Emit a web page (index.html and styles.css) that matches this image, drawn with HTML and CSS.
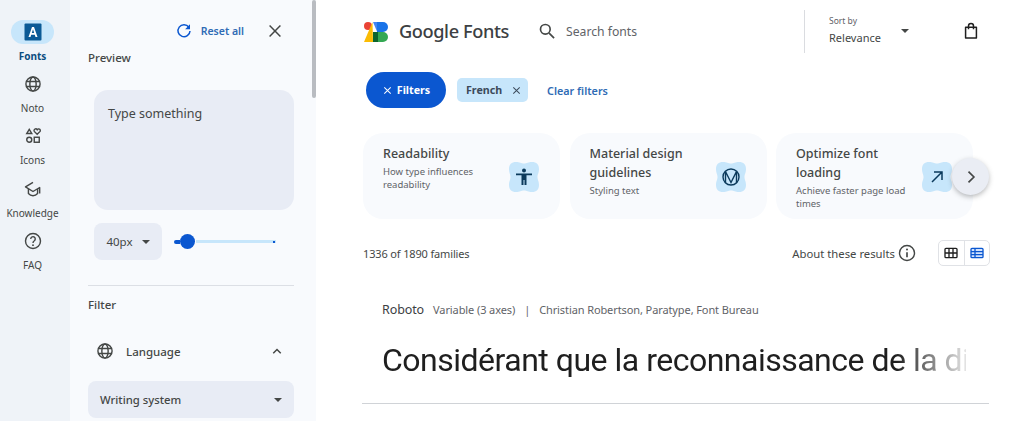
FILE: index.html
```html
<!DOCTYPE html>
<html lang="en">
<head>
<meta charset="utf-8">
<title>Google Fonts</title>
<link rel="stylesheet" href="styles.css">
</head>
<body>
<div class="page">
  <nav class="rail">
    <a class="rail-item active">
      <span class="pill"><svg class="ic-a" viewBox="0 0 18 18"><rect x="0.500" y="0.500" width="17" height="17" rx="1" fill="#0b5a96"/><path d="M4.500 14L8 4h2l3.500 10h-2l-.7-2.200H7.200L6.500 14zM7.800 10h2.400L9 6.300z" fill="#fff"/></svg></span>
      <span class="rail-label">Fonts</span>
    </a>
    <a class="rail-item">
      <svg class="ic" viewBox="0 0 24 24"><g fill="none" stroke="#444746" stroke-width="1.700"><circle cx="12" cy="12" r="8.500"/><ellipse cx="12" cy="12" rx="3.800" ry="8.500"/><path d="M3.500 9h17M3.500 15h17"/></g></svg>
      <span class="rail-label">Noto</span>
    </a>
    <a class="rail-item">
      <svg class="ic" viewBox="0 0 24 24"><g fill="none" stroke="#444746" stroke-width="1.700"><path d="M7.500 4l3 5h-6z"/><circle cx="7.500" cy="16.500" r="3"/><rect x="13.500" y="13.500" width="6" height="6"/><path d="M17 10l-3.500-3.500a2 2 0 0 1 3.500-2 2 2 0 0 1 3.500 2z"/></g></svg>
      <span class="rail-label">Icons</span>
    </a>
    <a class="rail-item">
      <svg class="ic" viewBox="0 0 24 24"><g fill="none" stroke="#444746" stroke-width="1.700" stroke-linejoin="round"><path d="M12 4L3 9.500 12 15l8-4.800V17.500"/><path d="M6.500 12v5.500c1.500 1.700 3.500 2.500 5.500 2.500s4-.8 5.500-2.500V12"/></g></svg>
      <span class="rail-label">Knowledge</span>
    </a>
    <a class="rail-item">
      <svg class="ic" viewBox="0 0 24 24"><circle cx="12" cy="12" r="9" fill="none" stroke="#444746" stroke-width="1.700"/><path d="M9.300 9.500a2.700 2.700 0 1 1 4.300 2.200c-1 .7-1.600 1.200-1.600 2.600" fill="none" stroke="#444746" stroke-width="1.700"/><circle cx="12" cy="17" r="1.100" fill="#444746"/></svg>
      <span class="rail-label">FAQ</span>
    </a>
  </nav>

  <aside class="panel">
    <div class="panel-top">
      <svg class="ic reset-ic" viewBox="0 0 24 24"><path d="M18.500 7A8 8 0 1 0 20 12" fill="none" stroke="#0b57d0" stroke-width="2"/><path d="M20 3v6.500h-6.500z" fill="#0b57d0"/></svg>
      <span class="reset-text">Reset all</span>
      <svg class="ic close-ic" viewBox="0 0 24 24"><path d="M5.500 5.500l13 13M18.500 5.500l-13 13" stroke="#444746" stroke-width="1.800" fill="none"/></svg>
    </div>
    <div class="section-label">Preview</div>
    <div class="preview-box">Type something</div>
    <div class="size-row">
      <div class="size-select"><span>40px</span><span class="caret"></span></div>
      <div class="slider"><span class="slider-left"></span><span class="knob"></span><span class="slider-right"></span><span class="slider-dot"></span></div>
    </div>
    <div class="panel-divider"></div>
    <div class="section-label filter-label">Filter</div>
    <div class="lang-row">
      <svg class="ic" viewBox="0 0 24 24"><g fill="none" stroke="#444746" stroke-width="1.700"><circle cx="12" cy="12" r="8.500"/><ellipse cx="12" cy="12" rx="3.800" ry="8.500"/><path d="M3.500 9h17M3.500 15h17"/></g></svg>
      <span class="lang-text">Language</span>
      <svg class="ic chev" viewBox="0 0 24 24"><path d="M7 15l5-5 5 5" fill="none" stroke="#444746" stroke-width="2"/></svg>
    </div>
    <div class="writing"><span>Writing system</span><span class="caret"></span></div>
    <div class="scroll-thumb"></div>
  </aside>

  <main class="main">
    <header class="top">
      <svg class="logo" viewBox="0 0 26 22"><circle cx="5" cy="5" r="4" fill="#ea4335"/><path d="M9.500 1L1 21h9z" fill="#fbbc04"/><path d="M10 1h9v9.500h-5z" fill="#4285f4"/><path d="M14 1h6a5 5 0 0 1 0 10h-6z" fill="#1a73e8"/><path d="M10 21V11h10a5 5 0 0 1 0 10z" fill="#34a853"/><path d="M10 11h5v10h-5z" fill="#0d652d"/></svg>
      <span class="brand">Google Fonts</span>
      <svg class="ic search-ic" viewBox="0 0 24 24"><circle cx="10" cy="10" r="5.800" fill="none" stroke="#444746" stroke-width="2"/><path d="M14.500 14.500L20.500 20.500" stroke="#444746" stroke-width="2"/></svg>
      <span class="search-text">Search fonts</span>
      <div class="sort">
        <div class="sort-text"><span class="sort-by">Sort by</span><span class="sort-val">Relevance</span></div>
        <span class="caret"></span>
      </div>
      <svg class="ic bag" viewBox="0 0 24 24"><path d="M5.500 7.500h13v13h-13z" fill="none" stroke="#1f1f1f" stroke-width="1.800" stroke-linejoin="round"/><path d="M9 10V6a3 3 0 0 1 6 0v4" fill="none" stroke="#1f1f1f" stroke-width="1.800"/></svg>
    </header>

    <div class="filters">
      <button class="filters-btn"><svg class="x-sm" viewBox="0 0 24 24"><path d="M5 5l14 14M19 5L5 19" stroke="#fff" stroke-width="2.200"/></svg>Filters</button>
      <span class="chip">French<svg class="x-sm" viewBox="0 0 24 24"><path d="M5 5l14 14M19 5L5 19" stroke="#3c4a5a" stroke-width="2.200"/></svg></span>
      <a class="clear">Clear filters</a>
    </div>

    <div class="cards">
      <article class="card">
        <div class="card-text"><h3>Readability</h3><p>How type influences readability</p></div>
        <span class="blob"><svg viewBox="0 0 32 32"><path class="blob-bg" d="M8 1c4 0 5 1.500 8 1.500S20 1 24 1c4.500 0 7 2.500 7 7 0 4-1.500 5-1.500 8s1.500 4 1.500 8c0 4.500-2.500 7-7 7-4 0-5-1.500-8-1.500S12 31 8 31c-4.500 0-7-2.500-7-7 0-4 1.500-5 1.500-8S1 12 1 8c0-4.500 2.500-7 7-7z"/><circle cx="16" cy="9.500" r="2" fill="#0b3a5c"/><path d="M8 12.500h16v1.800h-5.500V24h-2v-5h-1v5h-2v-9.700H8z" fill="#0b3a5c"/></svg></span>
      </article>
      <article class="card">
        <div class="card-text"><h3>Material design guidelines</h3><p>Styling text</p></div>
        <span class="blob"><svg viewBox="0 0 32 32"><path class="blob-bg" d="M8 1c4 0 5 1.500 8 1.500S20 1 24 1c4.500 0 7 2.500 7 7 0 4-1.500 5-1.500 8s1.500 4 1.500 8c0 4.500-2.500 7-7 7-4 0-5-1.500-8-1.500S12 31 8 31c-4.500 0-7-2.500-7-7 0-4 1.500-5 1.500-8S1 12 1 8c0-4.500 2.500-7 7-7z"/><g fill="none" stroke="#0b3a5c" stroke-width="1.400"><circle cx="16" cy="16" r="8"/><path d="M10.500 10.500V22M21.500 10.500V22M10.500 10.500L16 21.500l5.500-11"/></g></svg></span>
      </article>
      <article class="card">
        <div class="card-text"><h3>Optimize font loading</h3><p>Achieve faster page load times</p></div>
        <span class="blob"><svg viewBox="0 0 32 32"><path class="blob-bg" d="M8 1c4 0 5 1.500 8 1.500S20 1 24 1c4.500 0 7 2.500 7 7 0 4-1.500 5-1.500 8s1.500 4 1.500 8c0 4.500-2.500 7-7 7-4 0-5-1.500-8-1.500S12 31 8 31c-4.500 0-7-2.500-7-7 0-4 1.500-5 1.500-8S1 12 1 8c0-4.500 2.500-7 7-7z"/><path d="M11 21l9.500-9.500M13 11h8v8" fill="none" stroke="#0b3a5c" stroke-width="1.500"/></svg></span>
      </article>
      <button class="next"><svg class="ic" viewBox="0 0 24 24"><path d="M9 5.500l6.500 6.500L9 18.500" fill="none" stroke="#444746" stroke-width="2"/></svg></button>
    </div>

    <div class="results">
      <span class="count">1336 of 1890 families</span>
      <span class="about">About these results</span>
      <svg class="ic info" viewBox="0 0 24 24"><circle cx="12" cy="12" r="9" fill="none" stroke="#444746" stroke-width="1.700"/><path d="M12 11v6" stroke="#444746" stroke-width="2"/><circle cx="12" cy="7.800" r="1.200" fill="#444746"/></svg>
      <div class="toggle">
        <span class="tog"><svg class="ic-sm" viewBox="0 0 24 24"><g fill="none" stroke="#1f1f1f" stroke-width="2"><rect x="3" y="5" width="18" height="14" rx="1.500"/><path d="M3 12h18M9 5v14M15 5v14"/></g></svg></span>
        <span class="tog tog-on"><svg class="ic-sm" viewBox="0 0 24 24"><rect x="3" y="5" width="18" height="14" rx="1.500" fill="#d3e3fd" stroke="#0b57d0" stroke-width="2"/><path d="M3 10h18M3 14.500h18M9 5v14" stroke="#0b57d0" stroke-width="2" fill="none"/></svg></span>
      </div>
    </div>

    <section class="font-row">
      <div class="font-meta"><span class="font-name">Roboto</span><span>Variable (3 axes)</span><span>|</span><span>Christian Robertson, Paratype, Font Bureau</span></div>
      <div class="font-sample">Considérant que la reconnaissance de la dignité</div>
    </section>
  </main>
</div>
</body>
</html>
```
FILE: styles.css
```css
* { box-sizing: border-box; }
html, body { margin: 0; height: 421px; overflow: hidden; background: #fff; }
body { font-family: "Noto Sans", "Open Sans", sans-serif; color: #444746; }
svg { display: block; flex: none; }
.ic { width: 20px; height: 20px; }
.ic-sm { width: 16px; height: 16px; }
.ic-a { width: 18px; height: 18px; }

.page { display: flex; height: 421px; }

.rail { width: 70px; flex: none; background: #eff3f8; padding: 20px 5px 0 0; display: flex; flex-direction: column; align-items: center; gap: 10.500px; }
.rail-item { height: 42px; display: flex; flex-direction: column; align-items: center; justify-content: space-between; }
.rail-item.active { height: 43px; margin-bottom: -1px; }
.pill { width: 43px; height: 24px; border-radius: 12px; background: #c7e6fb; display: flex; align-items: center; justify-content: center; }
.rail-item:not(.active) .ic { margin-top: 1px; }
.rail-label { font-size: 10px; line-height: 14px; color: #444746; white-space: nowrap; }
.active .rail-label { color: #0b4d80; font-weight: 700; }

.panel { width: 246px; flex: none; background: #f8fafd; position: relative; padding: 0 22px 0 18px; overflow: hidden; }
.panel-top { margin-top: 21px; margin-right: 10px; display: flex; align-items: center; height: 20px; justify-content: flex-end; }
.reset-ic { width: 18px; height: 18px; }
.reset-text { font-size: 10.500px; font-weight: 600; color: #2f6bb5; margin-left: 8px; }
.close-ic { margin-left: 21px; margin-right: -1px; }
.section-label { font-size: 11.500px; font-weight: 500; color: #444746; line-height: 16px; margin-top: 9px; }
.preview-box { margin: 24px 0 0 6px; width: 200px; height: 120px; border-radius: 14px; background: #e8ecf5; padding: 15px 14px; font-size: 12.500px; line-height: 18px; color: #444746; }
.size-row { display: flex; align-items: center; margin: 13px 0 0 6px; }
.size-select { width: 68px; height: 37px; border-radius: 8px; background: #e8ecf5; display: flex; align-items: center; justify-content: center; gap: 9px; font-size: 11.500px; }
.caret { display: block; width: 0; height: 0; border-left: 4px solid transparent; border-right: 4px solid transparent; border-top: 4px solid #444746; flex: none; }
.slider { display: flex; align-items: center; margin-left: 12px; width: 102px; position: relative; }
.slider-left { width: 6px; height: 4px; background: #0b57d0; border-radius: 2px 0 0 2px; }
.knob { width: 15px; height: 15px; border-radius: 50%; background: #0b57d0; flex: none; }
.slider-right { flex: 1; height: 3px; background: #c7e6fb; margin-left: 1px; }
.slider-dot { position: absolute; right: 1px; top: 50%; width: 2px; height: 2px; margin-top: -1px; background: #0b57d0; }
.panel-divider { height: 1px; background: #dcdfe5; margin-top: 25px; width: 206px; }
.filter-label { margin-top: 11px; }
.lang-row { display: flex; align-items: center; width: 206px; margin-top: 28px; padding: 0 8px 0 7px; height: 20px; }
.lang-text { font-size: 11.500px; font-weight: 500; margin-left: 11px; }
.chev { margin-left: auto; width: 18px; height: 18px; }
.writing { margin-top: 20px; width: 206px; height: 37px; border-radius: 8px; background: #e8ecf5; display: flex; align-items: center; justify-content: space-between; padding: 0 12px; font-size: 11.300px; font-weight: 500; }
.scroll-thumb { position: absolute; right: 0; top: 0; width: 4px; height: 98px; background: #b9bcc1; border-radius: 2px; }

.main { flex: 1; min-width: 0; padding-left: 47px; overflow: hidden; }
.top { height: 62px; display: flex; align-items: center; }
.logo { width: 26px; height: 22px; margin-top: 1px; }
.brand { font-size: 18.200px; font-weight: 500; letter-spacing: -.4px; color: #3c4043; margin-left: 10px; width: 138px; white-space: nowrap; }
.search-text { font-size: 12.200px; color: #5f6368; margin-left: 9px; width: 238px; white-space: nowrap; }
.sort { height: 43px; border-left: 1px solid #dadce0; display: flex; align-items: center; padding-left: 24px; width: 157px; }
.sort-text { display: flex; flex-direction: column; width: 72px; }
.sort-by { font-size: 8.500px; line-height: 12px; color: #5f6368; }
.sort-val { font-size: 11px; line-height: 18px; color: #444746; margin-top: 2px; }
.bag { width: 20px; height: 20px; }

.filters { display: flex; align-items: center; margin: 10px 0 0 3px; height: 36px; }
.filters-btn { width: 80px; height: 36px; border: 0; border-radius: 18px; background: #0b57d0; color: #fff; display: flex; align-items: center; justify-content: center; gap: 4px; font: 700 10.700px "Noto Sans", sans-serif; padding: 0; }
.x-sm { width: 11px; height: 11px; }
.chip { display: flex; align-items: center; gap: 9px; height: 24px; margin-left: 11px; width: 71px; padding-left: 9px; background: #c7e6fb; border-radius: 5px; font-size: 10.700px; font-weight: 700; color: #3c4a5a; }
.clear { margin-left: 19px; font-size: 10.800px; font-weight: 600; color: #2f6bb5; }

.cards { position: relative; display: flex; gap: 9.500px; margin: 25px 0 0; height: 86px; width: 627px; }
.card { width: 197px; height: 86px; flex: none; border-radius: 20px; background: #f8fafd; display: flex; align-items: flex-start; padding: 11px 20px 0 20px; }
.card-text { flex: 1; min-width: 0; }
.card h3 { margin: 0; font-size: 12.500px; font-weight: 500; line-height: 19px; color: #444746; }
.card p { margin: 3px 0 0; font-size: 9.500px; line-height: 12.500px; color: #5f6368; }
.blob { width: 32px; height: 32px; flex: none; margin-top: 17px; }
.blob svg { width: 32px; height: 32px; }
.blob-bg { fill: #c7e6fb; }
.next { position: absolute; left: 589px; top: 25px; width: 37px; height: 37px; border: 0; border-radius: 50%; background: #eaedf4; box-shadow: 0 2px 5px rgba(60,64,67,.35); display: flex; align-items: center; justify-content: center; padding: 0; }

.results { display: flex; align-items: center; margin: 21px 0 0; height: 26px; width: 627px; }
.count { font-size: 11px; color: #444746; letter-spacing: -.15px; }
.about { font-size: 11.300px; margin-left: auto; color: #444746; }
.info { margin-left: 2px; }
.toggle { display: flex; margin-left: 21px; width: 52px; height: 26px; border: 1px solid #e0e2e6; border-radius: 5px; }
.tog { flex: 1; display: flex; align-items: center; justify-content: center; }
.tog-on { border-left: 1px solid #e0e2e6; }

.font-row { width: 627px; margin-left: -1px; padding: 37px 0 0 20px; height: 138px; border-bottom: 1px solid #d0d3d7; }
.font-meta { display: flex; align-items: baseline; gap: 9px; font-size: 11px; line-height: 14px; color: #5f6368; letter-spacing: -.1px; }
.font-name { font-size: 12.500px; color: #3c4043; }
.font-sample { margin-top: 19px; width: 584px; font: 400 32px/48px Roboto, sans-serif; letter-spacing: -.5px; color: #1f1f1f; white-space: nowrap; overflow: hidden; -webkit-mask-image: linear-gradient(to right, #000 88%, rgba(0,0,0,.12) 100%); mask-image: linear-gradient(to right, #000 88%, rgba(0,0,0,.12) 100%); }
```
